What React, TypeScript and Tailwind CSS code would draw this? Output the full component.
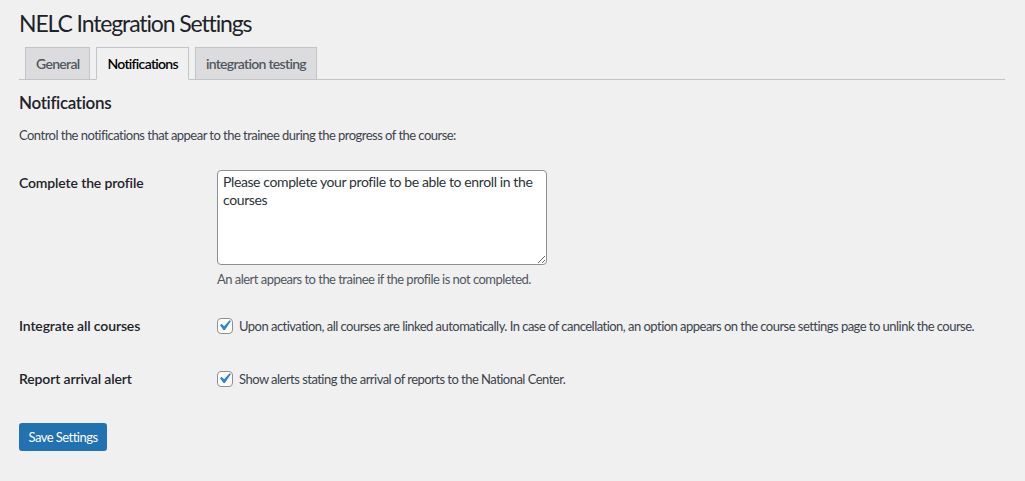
import React, { useState } from 'react';

const font = { fontFamily: 'Lato, "Noto Sans", Arial, sans-serif' };

function CheckMark() {
  return (
    <svg viewBox="0 0 20 20" className="absolute -left-[3px] -top-[3px] w-[21px] h-[21px] pointer-events-none">
      <path d="M14.83 4.89l1.34.94-5.81 8.38H9.02L5.78 9.67l1.34-1.25 2.57 2.4z" fill="#3582c4" />
    </svg>
  );
}

function Check({ checked, onChange }: { checked: boolean; onChange: () => void }) {
  return (
    <span className="relative inline-block w-4 h-4 shrink-0">
      <input
        type="checkbox"
        checked={checked}
        onChange={onChange}
        className="appearance-none w-4 h-4 m-0 rounded-[4px] border border-[#8c8f94] bg-white block"
      />
      {checked && <CheckMark />}
    </span>
  );
}

const tabs = ['General', 'Notifications', 'integration testing'];

const th = 'w-[198px] shrink-0 text-[14px] leading-[18px] font-semibold text-[#1d2327] tracking-[-0.01em]';

export default function App() {
  const [tab, setTab] = useState('Notifications');
  const [msg, setMsg] = useState('Please complete your profile to be able to enroll in the courses');
  const [linkAll, setLinkAll] = useState(true);
  const [reports, setReports] = useState(true);

  return (
    <div className="min-h-screen bg-[#f0f0f1] text-[#3c434a] pl-[19px] pr-5 tracking-[-0.033em]" style={font}>
      <h1 className="pt-[8px] text-[23px] leading-[30px] font-normal text-[#1d2327] tracking-[-0.049em]">
        NELC Integration Settings
      </h1>

      <div className="mt-[9px] flex items-end border-b border-[#c3c4c7] pl-[6px]">
        {tabs.map((t, i) => (
          <button
            key={t}
            onClick={() => setTab(t)}
            className={`-mb-px h-[33px] px-[10px] border text-[14px] font-semibold leading-[22px] tracking-[-0.05em] ${
              i > 0 ? 'ml-[6px]' : ''
            } ${
              tab === t
                ? 'bg-[#f0f0f1] border-[#c3c4c7] border-b-[#f0f0f1] text-black'
                : 'bg-[#dcdcde] border-[#c3c4c7] text-[#50575e]'
            }`}
          >
            {t}
          </button>
        ))}
      </div>

      <h2 className="mt-[12px] text-[17px] leading-[22px] font-semibold text-[#1d2327] tracking-[-0.02em]">
        Notifications
      </h2>
      <p className="mt-[11px] text-[13px] leading-[20px]">
        Control the notifications that appear to the trainee during the progress of the course:
      </p>

      <div className="mt-[25px] flex">
        <div className={`${th} pt-[4px]`}>Complete the profile</div>
        <div>
          <textarea
            value={msg}
            onChange={(e) => setMsg(e.target.value)}
            className="block w-[330px] h-[95px] rounded-[4px] border border-[#8c8f94] bg-white pl-[5px] pr-[6px] py-[2px] text-[14px] leading-[18px] text-[#2c3338] tracking-[-0.028em] outline-none"
          />
          <p className="mt-[4px] text-[13px] leading-[20px] text-[#50575e]">
            An alert appears to the trainee if the profile is not completed.
          </p>
        </div>
      </div>

      <div className="mt-[27px] flex items-center">
        <div className={th}>Integrate all courses</div>
        <label className="flex items-center gap-[6px] text-[13px] leading-[20px] whitespace-nowrap">
          <Check checked={linkAll} onChange={() => setLinkAll(!linkAll)} />
          Upon activation, all courses are linked automatically. In case of cancellation, an option appears on the
          course settings page to unlink the course.
        </label>
      </div>

      <div className="mt-[33px] flex items-center">
        <div className={th}>Report arrival alert</div>
        <label className="flex items-center gap-[6px] text-[13px] leading-[20px] whitespace-nowrap">
          <Check checked={reports} onChange={() => setReports(!reports)} />
          Show alerts stating the arrival of reports to the National Center.
        </label>
      </div>

      <button className="mt-[34px] h-[28px] w-[88px] rounded-[3px] bg-[#2271b1] text-white text-[13px] leading-[26px]">
        Save Settings
      </button>
    </div>
  );
}
